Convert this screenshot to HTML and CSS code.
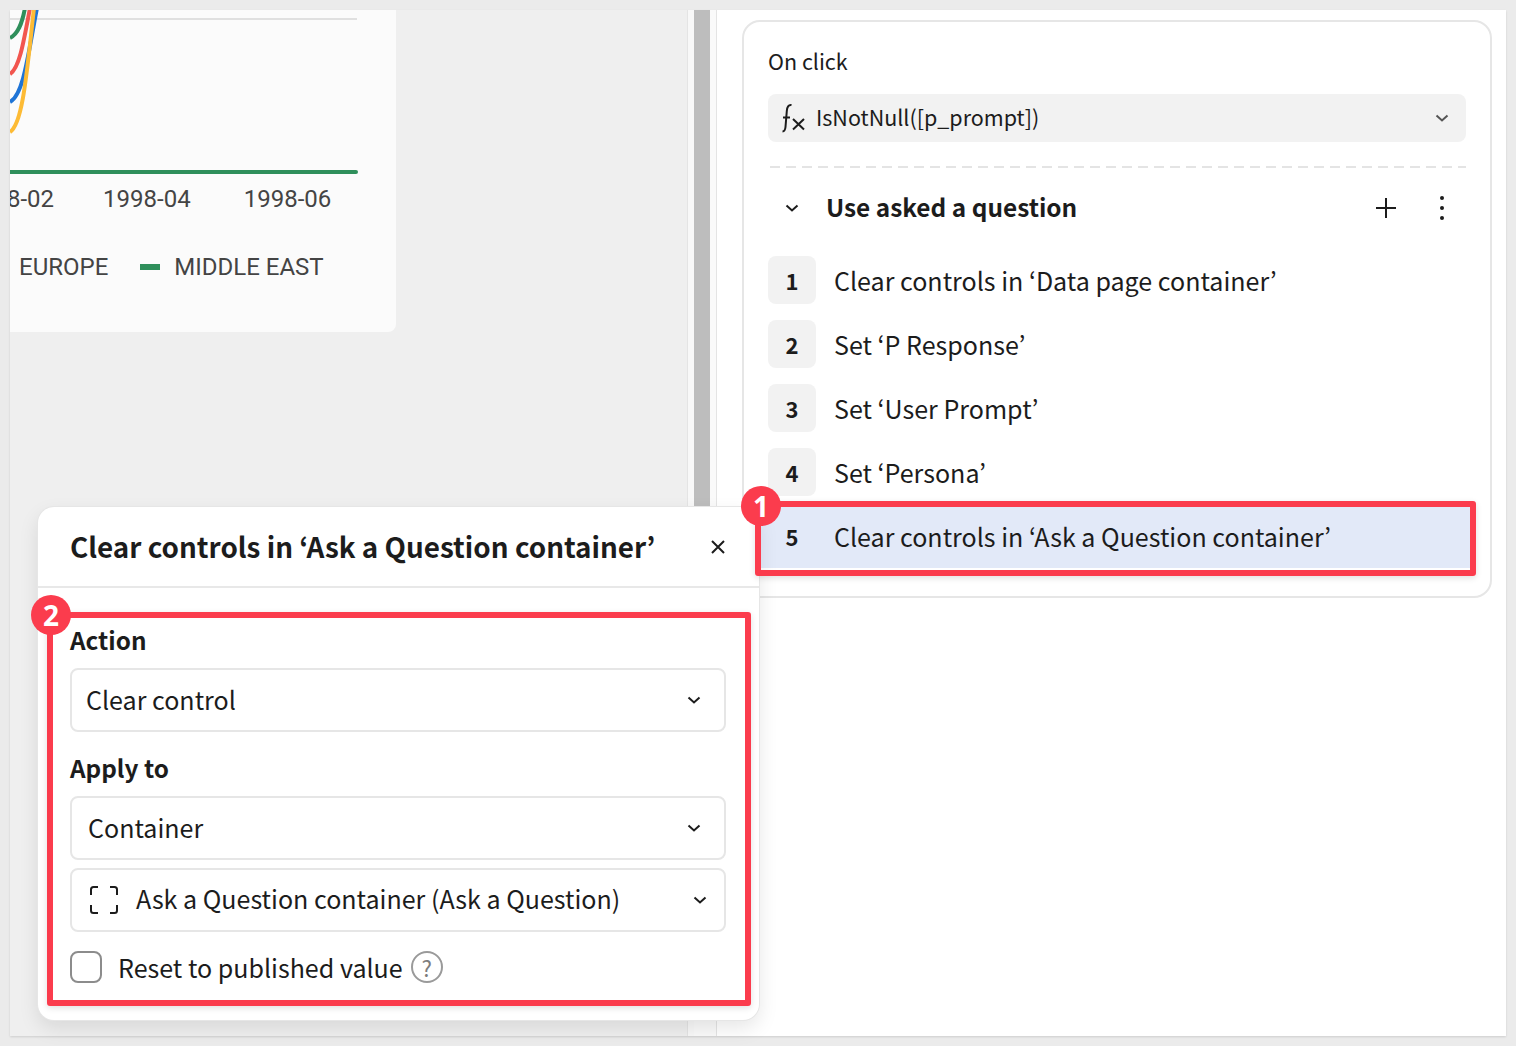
FILE: index.html
```html
<html>
<head>
  <title>Clear controls action</title>
  <link rel="stylesheet" href="styles.css">
</head>
<body>
  <div class="frame">
    <div class="left-pane">
      <div class="chart-card">
        <svg class="plot" width="386" height="166" viewBox="0 0 386 166">
          <line class="grid-line" x1="0" y1="9" x2="347" y2="9"></line>
          <path class="curve" stroke="#2f8f5b" d="M0 28 C8 24 12 14 15 -2"></path>
          <path class="curve" stroke="#f2564f" d="M0 64 C9 58 13 36 20 -2"></path>
          <path class="curve" stroke="#1f74d6" d="M0 92 C14 84 18 44 27 -2"></path>
          <path class="curve" stroke="#fdbb35" d="M0 122 C13 114 17 60 24 -2"></path>
          <line class="base-line" x1="0" y1="162" x2="346" y2="162"></line>
        </svg>
        <div class="axis-labels">
          <span>8-02</span>
          <span>1998-04</span>
          <span class="last-label">1998-06</span>
        </div>
        <div class="legend">
          <span>EUROPE</span>
          <i class="legend-mark"></i>
          <span>MIDDLE EAST</span>
        </div>
      </div>
    </div>
    <div class="sash"></div>
    <div class="right-pane">
      <div class="action-card">
        <div class="field-label">On click</div>
        <div class="formula">
          <svg class="fx-icon" width="24" height="30" viewBox="0 0 24 30">
            <path d="M9.5 2 C6.5 1.5 5 4 4.8 8 L3.5 24 C3.2 27 2.5 28.5 0.5 28.5 M1 14.5 H8"></path>
            <path d="M11 16 L22 26.5 M22 16 L11 26.5"></path>
          </svg>
          <span class="formula-text">IsNotNull([p_prompt])</span>
          <svg class="chevron chevron-grey" width="14" height="8" viewBox="0 0 14 8"><path d="M1.5 1.5 L7 6.5 L12.5 1.5"></path></svg>
        </div>
        <div class="dash-line"></div>
        <div class="sequence-head">
          <svg class="chevron seq-chevron" width="14" height="8" viewBox="0 0 14 8"><path d="M1.5 1.5 L7 6.5 L12.5 1.5"></path></svg>
          <h2>Use asked a question</h2>
          <svg class="plus-icon" width="20" height="20" viewBox="0 0 20 20"><path d="M10 0 V20 M0 10 H20"></path></svg>
          <svg class="dots-icon" width="4" height="24" viewBox="0 0 4 24"><circle cx="2" cy="2" r="2"></circle><circle cx="2" cy="12" r="2"></circle><circle cx="2" cy="22" r="2"></circle></svg>
        </div>
        <div class="step"><b>1</b><span>Clear controls in ‘Data page container’</span></div>
        <div class="step"><b>2</b><span>Set ‘P Response’</span></div>
        <div class="step"><b>3</b><span>Set ‘User Prompt’</span></div>
        <div class="step"><b>4</b><span>Set ‘Persona’</span></div>
        <div class="step step-active"><b>5</b><span>Clear controls in ‘Ask a Question container’</span></div>
      </div>
    </div>
  </div>

  <div class="popover">
    <div class="popover-head">
      <h1>Clear controls in ‘Ask a Question container’</h1>
      <svg class="close-icon" width="14" height="14" viewBox="0 0 14 14"><path d="M1 1 L13 13 M13 1 L1 13"></path></svg>
    </div>
    <div class="popover-body">
      <label>Action</label>
      <div class="select select-action">
        <span>Clear control</span>
        <svg class="chevron" width="14" height="8" viewBox="0 0 14 8"><path d="M1.5 1.5 L7 6.5 L12.5 1.5"></path></svg>
      </div>
      <label class="apply-label">Apply to</label>
      <div class="select">
        <span>Container</span>
        <svg class="chevron" width="14" height="8" viewBox="0 0 14 8"><path d="M1.5 1.5 L7 6.5 L12.5 1.5"></path></svg>
      </div>
      <div class="select select-target">
        <svg class="frame-icon" width="28" height="28" viewBox="0 0 28 28">
          <path d="M1 9 V3.5 Q1 1 3.5 1 H8 M20 1 H24.5 Q27 1 27 3.5 V9 M27 19 V24.5 Q27 27 24.5 27 H20 M8 27 H3.5 Q1 27 1 24.5 V19"></path>
        </svg>
        <span>Ask a Question container (Ask a Question)</span>
        <svg class="chevron" width="14" height="8" viewBox="0 0 14 8"><path d="M1.5 1.5 L7 6.5 L12.5 1.5"></path></svg>
      </div>
      <div class="check-row">
        <i class="checkbox"></i>
        <span>Reset to published value</span>
        <i class="help">?</i>
      </div>
    </div>
  </div>

  <div class="callout callout-one"></div>
  <div class="callout callout-two"></div>
  <div class="badge badge-one">1</div>
  <div class="badge badge-two">2</div>
</body>
</html>
```

FILE: styles.css
```css
body {
  margin: 0;
  width: 1516px;
  height: 1046px;
  overflow: hidden;
  background-color: #ebebeb;
  color: #1c1c1c;
  font-family: "Noto Sans CJK KR", "Noto Sans", sans-serif;
  position: relative;
}

.frame {
  margin: 10px;
  height: 1026px;
  display: flex;
  overflow: hidden;
  box-shadow: 0 1px 2px rgba(0, 0, 0, 0.12);
}

/* Left side with the chart */
.left-pane {
  width: 677px;
  background-color: #efefef;
  border-right: 1px solid #e4e4e4;
}

.chart-card {
  width: 386px;
  height: 322px;
  background-color: #fbfbfb;
  border-bottom-right-radius: 8px;
  overflow: hidden;
  font-family: Roboto, sans-serif;
  font-size: 24px;
  color: #444444;
}

.plot {
  display: block;
}

.curve {
  fill: none;
  stroke-width: 4;
}

.grid-line {
  stroke: #e0e0e0;
  stroke-width: 2;
}

.base-line {
  stroke: #2f8f5b;
  stroke-width: 4;
  stroke-linecap: round;
}

.axis-labels {
  display: flex;
  gap: 49px;
  margin-left: -3px;
  margin-top: 9px;
  line-height: 28px;
  white-space: nowrap;
}

.last-label {
  margin-left: 4px;
}

.legend {
  display: flex;
  align-items: center;
  margin-left: 9px;
  margin-top: 40px;
  line-height: 28px;
}

.legend-mark {
  width: 20px;
  height: 6px;
  margin-left: 32px;
  margin-right: 14px;
  background-color: #2f8f5b;
}

.sash {
  width: 29px;
  flex: none;
  box-sizing: border-box;
  background-color: #fafafa;
  border-left: 6px solid #f8f8f8;
  border-right: 1px solid #e4e4e4;
  background-image: linear-gradient(#bdbdbd, #bdbdbd);
  background-size: 16px 600px;
  background-repeat: no-repeat;
}

/* Right side with the action list */
.right-pane {
  flex: 1;
  background-color: #ffffff;
  padding: 10px 14px 0 25px;
}

.action-card {
  box-sizing: border-box;
  height: 578px;
  border: 2px solid #e6e6e6;
  border-radius: 18px;
  padding: 21px 24px 0 24px;
}

.field-label {
  font-size: 21.5px;
  line-height: 36px;
}

.formula {
  height: 48px;
  margin-top: 15px;
  display: flex;
  align-items: center;
  padding: 0 17px 0 14px;
  background-color: #f2f2f2;
  border-radius: 8px;
  font-size: 21.5px;
}

.fx-icon {
  fill: none;
  stroke: #1c1c1c;
  stroke-width: 2;
  margin-right: 10px;
}

.formula-text {
  flex: 1;
  padding-bottom: 4px;
}

.chevron {
  fill: none;
  stroke: #1c1c1c;
  stroke-width: 2;
}

.chevron-grey {
  stroke: #555555;
}

.dash-line {
  height: 2px;
  margin: 24px 0 0 2px;
  background-image: repeating-linear-gradient(to right, #e4e4e4 0, #e4e4e4 10px, transparent 10px, transparent 16px);
}

.sequence-head {
  display: flex;
  align-items: center;
  height: 80px;
  margin-bottom: 8px;
}

.seq-chevron {
  margin-left: 17px;
  margin-right: 27px;
}

.sequence-head h2 {
  flex: 1;
  margin: 0 0 4px;
  font-size: 24.4px;
  font-weight: 600;
}

.plus-icon {
  fill: none;
  stroke: #1c1c1c;
  stroke-width: 2;
  margin-right: 44px;
}

.dots-icon {
  fill: #1c1c1c;
  margin-right: 22px;
}

.step {
  display: flex;
  align-items: center;
  height: 48px;
  margin-bottom: 16px;
  font-size: 25.05px;
}

.step b {
  width: 48px;
  height: 48px;
  margin-right: 18px;
  flex: none;
  display: flex;
  align-items: center;
  justify-content: center;
  background-color: #f2f2f2;
  border-radius: 8px;
  font-size: 22px;
  font-weight: 600;
}

.step-active {
  margin: -8px -6px 0 -8px;
  padding: 8px 0 8px 8px;
  background-color: #e2e9f8;
}

.step-active b {
  background-color: transparent;
}

/* Popover for the selected action */
.popover {
  position: absolute;
  left: 38px;
  top: 507px;
  width: 721px;
  height: 513px;
  background-color: #ffffff;
  border-radius: 16px;
  box-shadow: 0 0 0 1px #e6e6e6, 0 8px 20px rgba(0, 0, 0, 0.1);
}

.popover-head {
  box-sizing: border-box;
  height: 81px;
  display: flex;
  align-items: center;
  padding: 0 34px 2px 32px;
  border-bottom: 2px solid #e8e8e8;
}

.popover-head h1 {
  flex: 1;
  margin: 0;
  font-size: 27.85px;
  font-weight: 600;
}

.close-icon {
  fill: none;
  stroke: #1c1c1c;
  stroke-width: 2;
  margin-top: 2px;
}

.popover-body {
  padding: 32px 33px 0 32px;
}

.popover-body label {
  display: block;
  font-size: 24.3px;
  font-weight: 600;
  line-height: 40px;
}

.popover-body .apply-label {
  margin-top: 16px;
}

.select {
  box-sizing: border-box;
  height: 64px;
  margin-top: 8px;
  display: flex;
  align-items: center;
  justify-content: space-between;
  padding: 0 23px 0 16px;
  border: 2px solid #e6e6e6;
  border-radius: 8px;
  font-size: 25.05px;
}

.select span {
  padding-bottom: 2px;
}

.select-action {
  padding-left: 14px;
}

.select-target {
  padding-left: 18px;
  padding-right: 17px;
}

.select-target span {
  flex: 1;
  margin-left: 18px;
  padding-bottom: 4px;
}

.frame-icon {
  fill: none;
  stroke: #1c1c1c;
  stroke-width: 2;
}

.check-row {
  display: flex;
  align-items: center;
  margin-top: 19px;
  font-size: 25.05px;
  line-height: 32px;
}

.checkbox {
  width: 32px;
  height: 32px;
  box-sizing: border-box;
  border: 2px solid #8c8c8c;
  border-radius: 8px;
  margin-right: 16px;
}

.help {
  width: 32px;
  height: 32px;
  margin-left: 8px;
  box-sizing: border-box;
  border: 2px solid #9a9a9a;
  border-radius: 50%;
  display: flex;
  align-items: center;
  justify-content: center;
  font-style: normal;
  font-size: 22px;
  color: #7d7d7d;
}

/* Red tutorial annotations */
.callout {
  position: absolute;
  box-sizing: border-box;
  border: 6px solid #fb3c4d;
  border-radius: 3px;
  box-shadow: 0 2px 6px rgba(0, 0, 0, 0.12);
}

.callout-one {
  left: 755px;
  top: 501px;
  width: 721px;
  height: 75px;
}

.callout-two {
  left: 47px;
  top: 612px;
  width: 704px;
  height: 394px;
}

.badge {
  position: absolute;
  width: 40px;
  height: 40px;
  border-radius: 50%;
  background-color: #fb3c4d;
  color: #ffffff;
  font-family: "Open Sans", sans-serif;
  font-size: 28px;
  font-weight: 700;
  line-height: 40px;
  text-align: center;
}

.badge-one {
  left: 741px;
  top: 486px;
}

.badge-two {
  left: 31px;
  top: 595px;
}
```
